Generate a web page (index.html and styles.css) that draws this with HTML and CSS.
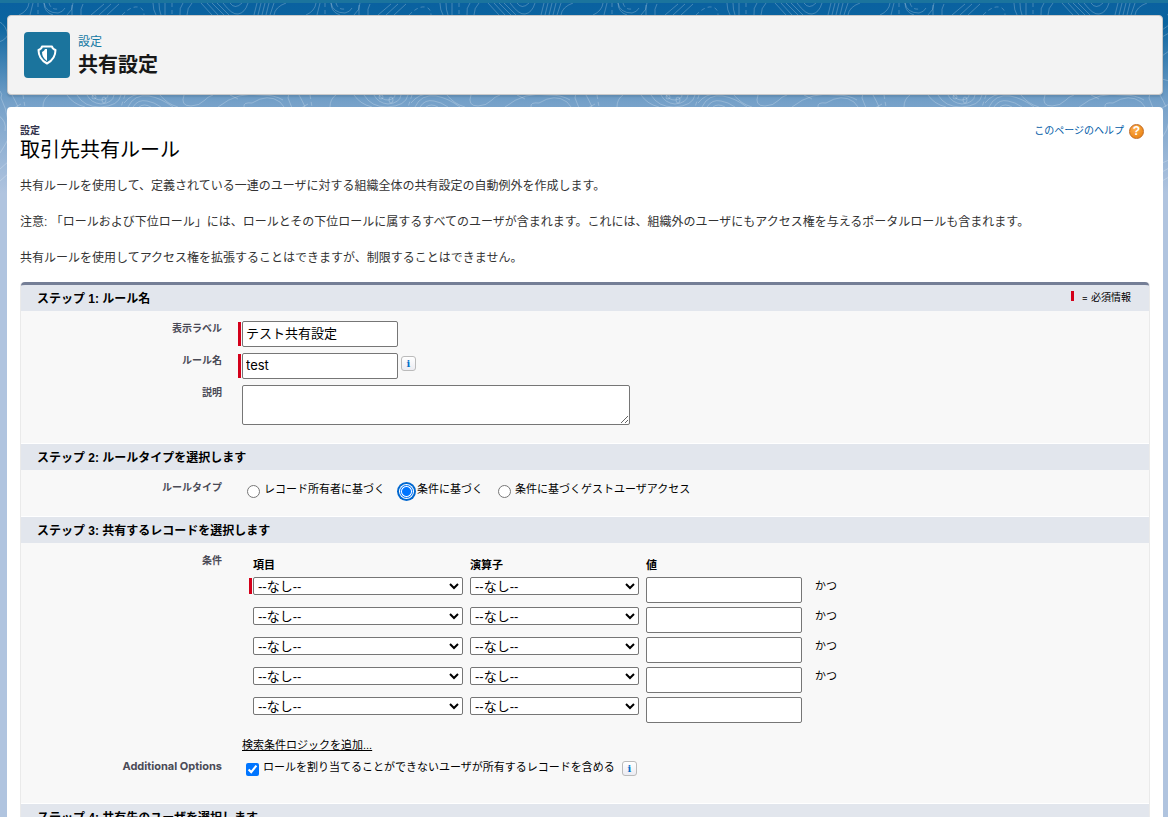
FILE: index.html
```html
<!DOCTYPE html>
<html lang="ja">
<head>
<meta charset="utf-8">
<title>共有設定</title>
<meta name="viewport" content="width=device-width, initial-scale=1">
<link rel="stylesheet" href="styles.css">
</head>
<body>
<div class="page">
  <svg class="contours" aria-hidden="true">
    <defs>
      <pattern id="topo" x="58" y="0" width="287" height="200" patternUnits="userSpaceOnUse">
        <g fill="none" stroke="#fff" stroke-opacity=".23" stroke-width="1">
          <path d="M0 10Q5 9 7 5M9 12Q15 7 15 0M14 12V2M23 12Q22 6 25 1M33 12L46 1M41 12L53 1M49 12L61 1M95 0Q95 7 98 12M101 0Q101 7 103 12M107 0V12M122 12Q121 5 125 0M129 12Q129 5 134 0"/>
          <path stroke-dasharray="4 3" d="M64 12Q73 3 80 4Q86 5 86 12M114 0V12M267 0V12M278 0Q280 7 287 6"/>
          <path d="M143 0L154 12M149 0L160 12M154 0L166 12M159 0L171 12M165 0Q174 12 180 11Q187 10 190 0M172 0Q177 7 184 0M199 0L196 12M203 0L200 12M207 0L204 12M211 0L208 12M216 0L212 12M228 0Q217 4 216 12M248 12Q257 8 258 0M262 0L259 12M273 0Q273 9 282 12M273 0Q275 10 287 10"/>
          <path d="M9 92Q15 101 27 104M19 92Q26 104 42 104Q61 103 63 92M29 92Q33 100 43 101Q55 100 56 92M34 92Q37 97 43 97Q50 96 50 92"/>
          <ellipse cx="46" cy="97" rx="2" ry="3"/><ellipse cx="36" cy="94" rx="2" ry="2"/>
          <path d="M70 104Q76 91 91 93Q103 95 115 104M75 104Q80 96 89 98Q96 99 103 104M81 104Q86 100 93 104M66 100Q74 90 86 91M126 92Q122 103 133 103Q141 103 147 97Q149 94 155 92M102 92Q109 101 120 104M172 92L180 96M186 104Q185 99 194 100Q210 90 222 99L226 104M160 104Q180 88 204 92Q217 92 225 97M241 92Q245 99 247 104M272 104Q272 96 278 92"/>
          <path stroke-dasharray="4 3" d="M67 92L63 104M252 92L254 104"/>
          <path d="M227 18Q236 22 237 34M226 40Q240 35 237 26M229 88Q232 91 230 95Q235 105 237 117M227 112Q236 118 234 128M229 150Q236 139 238 134M229 166L238 158M229 178L238 170M243 27L250 22M243 34L250 30M243 53L250 48M243 76L250 78M243 105L250 101M243 135Q249 127 250 118M243 160L250 157M243 169L250 165M243 178L250 174"/>
        </g>
      </pattern>
    </defs>
    <rect width="100%" height="100%" fill="url(#topo)"/>
  </svg>

  <header class="page-header">
    <div class="header-icon">
      <svg viewBox="0 0 20 20" width="20" height="20" aria-hidden="true">
        <path d="M5 1.5h10q.5 2.500 3.500 3.500Q18.500 14 10 18.500Q1.500 14 1.500 5Q4.500 4 5 1.500z" fill="none" stroke="#fff" stroke-width="2" stroke-linejoin="round"/>
        <path d="M10 4v12Q5 12.500 5 7Q7.500 6 8 4z" fill="#fff"/>
      </svg>
    </div>
    <div class="header-text">
      <p class="header-kicker">設定</p>
      <h1 class="header-title">共有設定</h1>
    </div>
  </header>

  <main class="content">
    <div class="intro-head">
      <div>
        <p class="intro-kicker">設定</p>
        <h2 class="intro-title">取引先共有ルール</h2>
      </div>
      <a class="help" href="#help">このページのヘルプ <span class="help-mark" aria-hidden="true">?</span></a>
    </div>
    <div class="intro-text">
      <p>共有ルールを使用して、定義されている一連のユーザに対する組織全体の共有設定の自動例外を作成します。</p>
      <p>注意: 「ロールおよび下位ロール」には、ロールとその下位ロールに属するすべてのユーザが含まれます。これには、組織外のユーザにもアクセス権を与えるポータルロールも含まれます。</p>
      <p>共有ルールを使用してアクセス権を拡張することはできますが、制限することはできません。</p>
    </div>

    <form class="rule-form">
      <div class="step-head">
        <h3>ステップ 1: ルール名</h3>
        <span class="legend"><span class="legend-bar"></span>= 必須情報</span>
      </div>
      <div class="step-body step-name">
        <label class="field-label" for="label">表示ラベル</label>
        <div class="field required"><input class="text-input" id="label" type="text" value="テスト共有設定" required></div>
        <label class="field-label" for="name">ルール名</label>
        <div class="field required"><input class="text-input" id="name" type="text" value="test" required><button class="info" type="button" aria-label="情報">i</button></div>
        <label class="field-label" for="description">説明</label>
        <div class="field"><textarea class="description" id="description"></textarea></div>
      </div>

      <div class="step-head"><h3>ステップ 2: ルールタイプを選択します</h3></div>
      <div class="step-body step-type">
        <span class="field-label" id="type-label">ルールタイプ</span>
        <div class="radio-group" role="radiogroup" aria-labelledby="type-label">
          <label class="choice"><input type="radio" name="type">レコード所有者に基づく</label>
          <label class="choice"><input class="is-focused" type="radio" name="type" checked>条件に基づく</label>
          <label class="choice"><input type="radio" name="type">条件に基づくゲストユーザアクセス</label>
        </div>
      </div>

      <div class="step-head"><h3>ステップ 3: 共有するレコードを選択します</h3></div>
      <div class="step-body step-records">
        <span class="field-label">条件</span>
        <div>
          <table class="criteria">
            <thead><tr><th class="col-field">項目</th><th class="col-operator">演算子</th><th class="col-value">値</th><td></td></tr></thead>
            <tbody>
              <tr><td class="criteria-required"><select aria-label="項目 1"><option>--なし--</option></select></td><td><select aria-label="演算子 1"><option>--なし--</option></select></td><td><input class="text-input" type="text" aria-label="値 1"></td><td class="joiner">かつ</td></tr>
              <tr><td><select aria-label="項目 2"><option>--なし--</option></select></td><td><select aria-label="演算子 2"><option>--なし--</option></select></td><td><input class="text-input" type="text" aria-label="値 2"></td><td class="joiner">かつ</td></tr>
              <tr><td><select aria-label="項目 3"><option>--なし--</option></select></td><td><select aria-label="演算子 3"><option>--なし--</option></select></td><td><input class="text-input" type="text" aria-label="値 3"></td><td class="joiner">かつ</td></tr>
              <tr><td><select aria-label="項目 4"><option>--なし--</option></select></td><td><select aria-label="演算子 4"><option>--なし--</option></select></td><td><input class="text-input" type="text" aria-label="値 4"></td><td class="joiner">かつ</td></tr>
              <tr><td><select aria-label="項目 5"><option>--なし--</option></select></td><td><select aria-label="演算子 5"><option>--なし--</option></select></td><td><input class="text-input" type="text" aria-label="値 5"></td><td></td></tr>
            </tbody>
          </table>
          <a class="logic-link" href="#logic">検索条件ロジックを追加...</a>
        </div>
        <span class="field-label latin-label">Additional Options</span>
        <div class="option-row">
          <label class="choice"><input type="checkbox" checked>ロールを割り当てることができないユーザが所有するレコードを含める</label>
          <button class="info" type="button" aria-label="情報">i</button>
        </div>
      </div>

      <div class="step-head"><h3>ステップ 4: 共有先のユーザを選択します</h3></div>
      <div class="step-body"></div>
    </form>
  </main>
</div>
</body>
</html>
```

FILE: styles.css
```css
* {
  box-sizing: border-box;
}

html {
  height: 100%;
}

body {
  height: 100%;
  margin: 0;
  overflow: hidden;
  background: #b0c4df;
  color: #000;
  font-family: "Liberation Sans", "Noto Sans CJK JP", sans-serif;
  font-size: 12px;
}

h1, h2, h3, p {
  margin: 0;
}

.page {
  position: relative;
  display: flex;
  flex-direction: column;
  gap: 12px;
  min-height: 100%;
  padding: 12px 5px 0 7px;
  border-top: 3px solid #1b749d;
  background: linear-gradient(#0a61a0 0, #0a649f 20px, #76a1c9 100px, #b0c4df 190px);
}

.contours {
  position: absolute;
  top: 0;
  left: 0;
  width: 100%;
  height: 190px;
}

.page-header {
  position: relative;
  display: flex;
  align-items: flex-start;
  gap: 8px;
  height: 80px;
  padding: 16px;
  border: 1px solid #c9c9c9;
  border-radius: 4px;
  background: #f3f3f3;
  box-shadow: 0 2px 2px rgba(0, 0, 0, .1);
}

.header-icon {
  display: flex;
  align-items: center;
  justify-content: center;
  width: 46px;
  height: 46px;
  border-radius: 4px;
  background: #1b749d;
}

.header-kicker {
  color: #1479a4;
  font-size: 12px;
  line-height: 20px;
}

.header-title {
  color: #181818;
  font-size: 20px;
  line-height: 26px;
}

.content {
  position: relative;
  flex: 1;
  padding: 16px 13px 0;
  border-radius: 4px 4px 0 0;
  background: #fff;
}

.intro-head {
  display: flex;
  align-items: flex-start;
  justify-content: space-between;
}

.intro-kicker {
  color: #33334c;
  font-size: 10px;
  font-weight: bold;
  line-height: 16px;
}

.intro-title {
  font-size: 20px;
  font-weight: normal;
  line-height: 22px;
}

.help {
  display: flex;
  align-items: center;
  gap: 5px;
  margin-right: 6px;
  color: #015ba7;
  font-size: 10px;
  line-height: 16px;
  text-decoration: none;
}

.help-mark {
  width: 15px;
  height: 15px;
  border: 1px solid #c26a21;
  border-radius: 50%;
  background: radial-gradient(circle at 40% 30%, #ffb04e, #ed8a1c 70%);
  color: #fff;
  font-size: 12px;
  font-weight: bold;
  line-height: 13px;
  text-align: center;
}

.intro-text {
  display: grid;
  gap: 18px;
  padding: 16px 0 15px;
  color: #333;
  font-size: 12px;
  line-height: 18px;
}

.rule-form {
  border: solid #eaeaea;
  border-width: 0 1px;
  border-radius: 4px;
  background: #f8f8f8;
}

.step-head {
  display: flex;
  align-items: center;
  justify-content: space-between;
  height: 27px;
  padding: 2px 18px 0 16px;
  border-top: 1px solid #fff;
  background: #e2e6ed;
}

.step-head:first-child {
  height: 29px;
  border-top: 3px solid #747e96;
  border-radius: 4px 4px 0 0;
}

.step-head h3 {
  font-size: 12px;
  line-height: 18px;
}

.legend {
  display: flex;
  align-items: flex-start;
  font-family: Inter, "Noto Sans CJK JP", sans-serif;
  font-size: 10px;
  line-height: 12px;
  padding-bottom: 4px;
}

.legend-bar {
  width: 3px;
  height: 10px;
  margin-right: 8px;
  background: #d4001a;
}

.step-body {
  display: grid;
  grid-template-columns: 201px 1fr;
  column-gap: 20px;
  align-items: start;
  align-content: start;
}

.step-name {
  row-gap: 6px;
  padding: 10px 0 18px;
}

.step-type {
  min-height: 46px;
  padding-top: 10px;
}

.step-records {
  min-height: 260px;
  padding-top: 10px;
}

.field-label {
  color: #4a4a56;
  font-size: 10px;
  font-weight: bold;
  line-height: 16px;
  text-align: right;
}

.latin-label {
  font-family: Inter, sans-serif;
  font-size: 11px;
}

.field {
  position: relative;
  display: flex;
  align-items: flex-start;
}

.required::before,
.criteria-required::before {
  content: "";
  position: absolute;
  top: 1px;
  left: -4px;
  width: 3px;
  height: 24px;
  background: #d4001a;
}

.text-input {
  display: block;
  width: 156px;
  height: 26px;
  padding: 0 3px 3px;
  border: 1px solid #767676;
  border-radius: 2px;
  background: #fff;
  color: #000;
  font-family: Inter, "Noto Sans CJK JP", sans-serif;
  font-size: 13px;
}

.info {
  width: 15px;
  height: 15px;
  margin: 3px 0 0 3px;
  padding: 0;
  border: 1px solid #bbb;
  border-radius: 3px;
  background: linear-gradient(#fff, #ececf2);
  color: #0270c9;
  font-family: "DejaVu Serif", serif;
  font-size: 10px;
  font-weight: bold;
  line-height: 13px;
}

.description {
  display: block;
  width: 388px;
  height: 40px;
  border: 1px solid #767676;
  border-radius: 2px;
  background: #fff;
}

.radio-group {
  display: flex;
  gap: 15px;
  padding-left: 5px;
}

.choice {
  display: flex;
  align-items: flex-start;
  gap: 4px;
  font-size: 11px;
  line-height: 18px;
}

.choice input {
  width: 13px;
  height: 13px;
  margin: 5px 0 0;
  accent-color: #0075ff;
}

.choice .is-focused {
  appearance: none;
  border: 1px solid #0075ff;
  border-radius: 50%;
  background: radial-gradient(circle, #0075ff 4px, #fff 5px);
  box-shadow: 0 0 0 1px #fff, 0 0 0 3px #0067cf;
}

.criteria {
  margin-left: 11px;
  border-collapse: collapse;
  font-size: 11px;
}

.criteria th,
.criteria td {
  position: relative;
  height: 30px;
  padding: 0 7px 0 0;
  text-align: left;
  vertical-align: top;
}

.criteria th,
.criteria thead td {
  height: 24px;
  padding-top: 4px;
  line-height: 16px;
}

.criteria .criteria-required::before {
  height: 16px;
}

.col-field {
  width: 217px;
}

.col-operator {
  width: 176px;
}

.criteria select {
  display: block;
  width: 100%;
  height: 18px;
  padding: 0 0 1px;
  border: 1px solid #767676;
  border-radius: 2px;
  background-color: #fff;
  color: #000;
  font-family: "Liberation Sans", "Noto Sans CJK JP", sans-serif;
  font-size: 13px;
}

.criteria .joiner {
  padding-left: 6px;
  line-height: 18px;
}

.logic-link {
  display: block;
  width: max-content;
  margin: 9px 0 4px;
  color: #000;
  font-size: 11px;
  line-height: 18px;
}

.option-row {
  display: flex;
  align-items: flex-start;
  gap: 4px;
  padding-left: 4px;
}
```
